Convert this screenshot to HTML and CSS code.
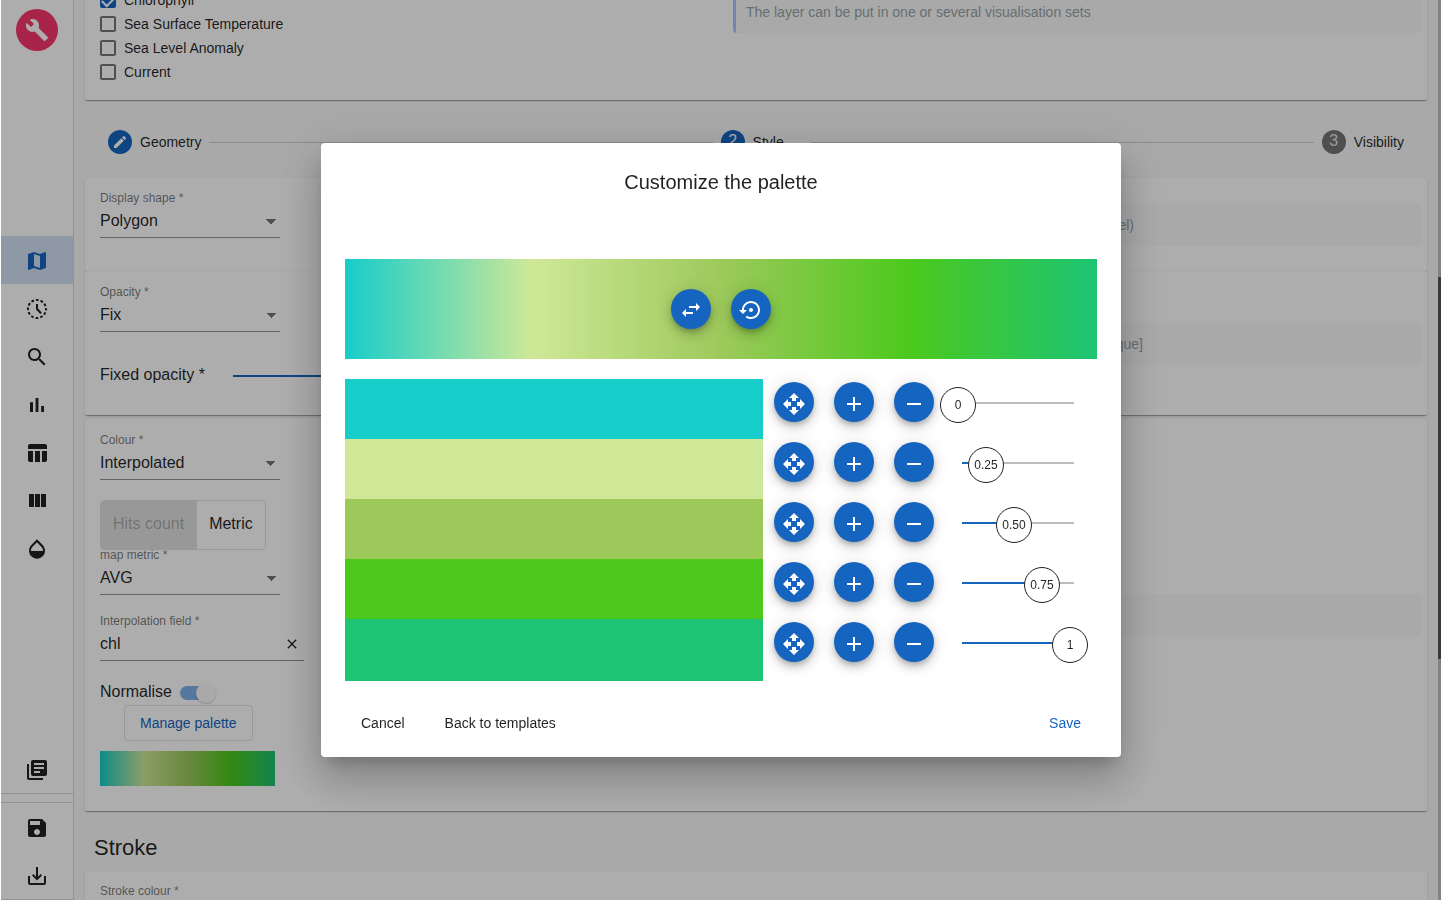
FILE: index.html
```html
<!DOCTYPE html>
<html lang="en">
<head>
<meta charset="utf-8">
<title>Layer edition</title>
<link rel="stylesheet" href="styles.css">
</head>
<body>
<div class="app">
  <nav class="sidebar">
    <a class="logo" href="#" aria-label="Home"><svg class="icon" viewBox="0 0 24 24"><path d="M22.7 19l-9.1-9.1c.9-2.3.4-5-1.5-6.9-2-2-5-2.4-7.4-1.3L9 6 6 9 1.6 4.7C.4 7.1.9 10.1 2.9 12.1c1.9 1.9 4.6 2.4 6.9 1.5l9.1 9.1c.4.4 1 .4 1.4 0l2.3-2.3c.5-.4.5-1.1.1-1.4z"/></svg></a>
    <div class="nav-main">
      <a class="nav-item active" href="#" aria-label="Map"><svg class="icon" viewBox="0 0 24 24"><path d="M20.5 3l-.16.03L15 5.1 9 3 3.36 4.9c-.21.07-.36.25-.36.48V20.5c0 .28.22.5.5.5l.16-.03L9 18.9l6 2.1 5.64-1.9c.21-.07.36-.25.36-.48V3.5c0-.28-.22-.5-.5-.5zM15 19l-6-2.11V5l6 2.11V19z"/></svg></a>
      <a class="nav-item" href="#" aria-label="Timeline"><svg class="icon" viewBox="0 0 24 24"><circle cx="12" cy="12" r="9" fill="none" stroke="currentColor" stroke-width="2" stroke-dasharray="2.7 2.012" stroke-dashoffset="1.35"/><path d="M11 7h2v4.6l3.8 4-1.5 1.3L11 12.4z"/></svg></a>
      <a class="nav-item" href="#" aria-label="Search"><svg class="icon" viewBox="0 0 24 24"><path d="M15.5 14h-.79l-.28-.27C15.41 12.59 16 11.11 16 9.5 16 5.91 13.09 3 9.5 3S3 5.91 3 9.5 5.91 16 9.5 16c1.61 0 3.09-.59 4.23-1.57l.27.28v.79l5 4.99L20.49 19l-4.99-5zm-6 0C7.01 14 5 11.99 5 9.5S7.01 5 9.5 5 14 7.01 14 9.5 11.99 14 9.5 14z"/></svg></a>
      <a class="nav-item" href="#" aria-label="Analytics"><svg class="icon" viewBox="0 0 24 24"><path d="M5 9.2h3V19H5zM10.6 5h2.8v14h-2.8zm5.6 8H19v6h-2.8z"/></svg></a>
      <a class="nav-item" href="#" aria-label="Table"><svg class="icon" viewBox="0 0 24 24"><path d="M10 10.02h5V21h-5zM17 21h3c1.1 0 2-.9 2-2v-9h-5v11zm3-18H5c-1.1 0-2 .9-2 2v3h19V5c0-1.1-.9-2-2-2zM3 19c0 1.1.9 2 2 2h3V10H3v9z"/></svg></a>
      <a class="nav-item" href="#" aria-label="Columns"><svg class="icon" viewBox="0 0 24 24"><path d="M10 18h5V5h-5v13zm-6 0h5V5H4v13zM16 5v13h5V5h-5z"/></svg></a>
      <a class="nav-item" href="#" aria-label="Look and feel"><svg class="icon" viewBox="0 0 24 24"><path d="M17.66 8L12 2.35 6.34 8C4.78 9.56 4 11.64 4 13.64s.78 4.11 2.34 5.67 3.61 2.35 5.66 2.35 4.1-.79 5.66-2.35S20 15.64 20 13.64 19.22 9.56 17.66 8zM6 14c.01-2 .62-3.27 1.76-4.4L12 5.27l4.24 4.38C17.38 10.77 17.99 12 18 14H6z"/></svg></a>
    </div>
    <div class="nav-library">
      <a class="nav-item" href="#" aria-label="Library"><svg class="icon" viewBox="0 0 24 24"><path d="M4 6H2v14c0 1.1.9 2 2 2h14v-2H4V6zm16-4H8c-1.1 0-2 .9-2 2v12c0 1.1.9 2 2 2h12c1.1 0 2-.9 2-2V4c0-1.1-.9-2-2-2zm-1 9H9V9h10v2zm-4 4H9v-2h6v2zm4-8H9V5h10v2z"/></svg></a>
    </div>
    <div class="nav-actions">
      <a class="nav-item" href="#" aria-label="Save"><svg class="icon" viewBox="0 0 24 24"><path d="M17 3H5c-1.11 0-2 .9-2 2v14c0 1.1.89 2 2 2h14c1.1 0 2-.9 2-2V7l-4-4zm-5 16c-1.66 0-3-1.34-3-3s1.34-3 3-3 3 1.34 3 3-1.34 3-3 3zm3-10H5V5h10v4z"/></svg></a>
      <a class="nav-item" href="#" aria-label="Download"><svg class="icon" viewBox="0 0 24 24"><path d="M19 12v7H5v-7H3v7c0 1.1.9 2 2 2h14c1.1 0 2-.9 2-2v-7h-2zm-6 .67l2.59-2.58L17 11.5l-5 5-5-5 1.41-1.41L11 12.67V3h2z"/></svg></a>
    </div>
  </nav>

  <main class="content">
    <div class="scrolled">
      <section class="card">
        <div class="checks">
          <label class="check"><input type="checkbox" checked>Chlorophyll</label>
          <label class="check"><input type="checkbox">Sea Surface Temperature</label>
          <label class="check"><input type="checkbox">Sea Level Anomaly</label>
          <label class="check"><input type="checkbox">Current</label>
        </div>
        <p class="hint active">The layer can be put in one or several visualisation sets</p>
      </section>

      <ol class="stepper">
        <li class="step"><span class="step-dot"><svg class="icon small" viewBox="0 0 24 24"><path d="M3 17.25V21h3.75L17.81 9.94l-3.75-3.75L3 17.25zM20.71 7.04c.39-.39.39-1.02 0-1.41l-2.34-2.34c-.39-.39-1.02-.39-1.41 0l-1.83 1.83 3.75 3.75 1.83-1.83z"/></svg></span><span class="step-label">Geometry</span></li>
        <li class="step-line" aria-hidden="true"></li>
        <li class="step"><span class="step-dot number">2</span><span class="step-label">Style</span></li>
        <li class="step-line" aria-hidden="true"></li>
        <li class="step"><span class="step-dot number pending">3</span><span class="step-label">Visibility</span></li>
      </ol>

      <section class="card">
        <div class="fields">
          <label class="field"><span class="field-label">Display shape *</span><select class="field-input"><option>Polygon</option></select></label>
        </div>
        <p class="hint"><span class="hint-text">Shape that displays the data (one per cell of the model)</span></p>
      </section>
      <section class="card">
        <div class="fields opacity">
          <label class="field"><span class="field-label">Opacity *</span><select class="field-input"><option>Fix</option></select></label>
          <label class="opacity-row">Fixed opacity *<input class="line-range" type="range" min="0" max="1" step="0.1" value="1"></label>
        </div>
        <p class="hint"><span class="hint-text wide">Opacity of the layer [transparent to opaque]</span></p>
      </section>

      <section class="card colour-card">
        <div class="fields colour">
          <label class="field"><span class="field-label">Colour *</span><select class="field-input"><option>Interpolated</option></select></label>
          <div class="toggle-group"><button class="toggle selected" type="button" disabled>Hits count</button><button class="toggle" type="button">Metric</button></div>
          <label class="field"><span class="field-label">map metric *</span><select class="field-input"><option>AVG</option></select></label>
          <div class="field long">
            <label class="field-label" for="interp">Interpolation field *</label>
            <div class="clearable"><input class="field-input plain" id="interp" type="text" value="chl"><button class="clear" type="button" aria-label="Clear"><svg class="icon small" viewBox="0 0 24 24"><path d="M19 6.41L17.59 5 12 10.59 6.41 5 5 6.41 10.59 12 5 17.59 6.41 19 12 13.41 17.59 19 19 17.59 13.41 12z"/></svg></button></div>
          </div>
          <label class="switch-row">Normalise<input class="switch" type="checkbox" checked></label>
          <button class="outline-button" type="button">Manage palette</button>
          <div class="palette palette-small"></div>
        </div>
        <p class="hint"></p>
      </section>

      <h2 class="section-title">Stroke</h2>
      <section class="card">
        <div class="fields">
          <label class="field"><span class="field-label">Stroke colour *</span><select class="field-input"><option>Fix</option></select></label>
        </div>
      </section>
    </div>
    <div class="scrollbar"><div class="scrollbar-thumb"></div></div>
  </main>
</div>

<div class="backdrop">
  <section class="dialog" role="dialog" aria-labelledby="dialog-title">
    <h1 class="dialog-title" id="dialog-title">Customize the palette</h1>
    <div class="palette palette-large">
      <button class="fab" type="button" aria-label="Reverse"><svg class="icon" viewBox="0 0 24 24"><path d="M6.99 11L3 15l3.99 4v-3H14v-2H6.99v-3zM21 9l-3.99-4v3H10v2h7.01v3L21 9z"/></svg></button>
      <button class="fab" type="button" aria-label="Reset"><svg class="icon" viewBox="0 0 24 24"><path d="M14 12c0-1.1-.9-2-2-2s-2 .9-2 2 .9 2 2 2 2-.9 2-2zm-2-9c-4.97 0-9 4.03-9 9H0l4 4 4-4H5c0-3.87 3.13-7 7-7s7 3.13 7 7-3.13 7-7 7c-1.51 0-2.91-.49-4.06-1.3l-1.42 1.44C8.04 20.3 9.94 21 12 21c4.97 0 9-4.03 9-9s-4.03-9-9-9z"/></svg></button>
    </div>
    <div class="stops" id="stops"></div>
    <div class="dialog-actions">
      <button class="text-button" type="button">Cancel</button>
      <button class="text-button" type="button">Back to templates</button>
      <button class="text-button primary" type="button">Save</button>
    </div>
  </section>
</div>
<script src="script.js"></script>
</body>
</html>
```

FILE: script.js
```js
const stops = [
  { color: "#16cdca", value: 0, label: "0" },
  { color: "#cfe897", value: 0.25, label: "0.25" },
  { color: "#9dc95b", value: 0.5, label: "0.50" },
  { color: "#4cc91c", value: 0.75, label: "0.75" },
  { color: "#1cc474", value: 1, label: "1" }
];

const icons = {
  Move: "M10 9h4V6h3l-5-5-5 5h3v3zm-1 1H6V7l-5 5 5 5v-3h3v-4zm14 2l-5-5v3h-3v4h3v3l5-5zm-9 3h-4v3H7l5 5 5-5h-3v-3z",
  Add: "M19 13h-6v6h-2v-6H5v-2h6V5h2v6h6v2z",
  Remove: "M19 13H5v-2h14v2z"
};

const buttons = Object.entries(icons).map(([name, d]) =>
  `<button class="fab" type="button" aria-label="${name}"><svg class="icon" viewBox="0 0 24 24"><path d="${d}"/></svg></button>`
).join("");

document.getElementById("stops").innerHTML = stops.map((s, i) =>
  `<div class="stop">
    <input class="swatch" type="color" value="${s.color}" aria-label="Colour ${i + 1}">
    <div class="stop-buttons">${buttons}</div>
    <div class="slider" style="--value:${s.value}">
      <input class="slider-input" type="range" min="0" max="1" step="0.01" value="${s.value}" aria-label="Position ${i + 1}">
      <output class="slider-value">${s.label}</output>
    </div>
  </div>`
).join("");
```

FILE: styles.css
```css
:root {
  --primary: #1565c0;
  --ink: rgba(0, 0, 0, .87);
  --line: #e0e0e0;
}

* { box-sizing: border-box; }

body {
  margin: 0;
  padding-left: 1px;
  height: 100vh;
  overflow: hidden;
  background: #fff;
  color: var(--ink);
  font: 14px "Liberation Sans", Arial, sans-serif;
}

button, input, select { font: inherit; color: inherit; margin: 0; }
button { border: 0; background: none; padding: 0; cursor: pointer; }

.icon { width: 24px; height: 24px; fill: currentColor; flex: none; display: block; }
.icon.small { width: 16px; height: 16px; }

.app { display: flex; height: 100%; background: #fafafa; }

/* Sidebar */
.sidebar {
  width: 73px;
  flex: none;
  display: flex;
  flex-direction: column;
  background: #fff;
  border-right: 1px solid #d8d8d8;
  border-bottom: 1px solid #d8d8d8;
}
.logo {
  width: 42px;
  height: 42px;
  margin: 9px auto 0;
  border-radius: 50%;
  display: grid;
  place-items: center;
  background: #f8366a;
  color: #fff;
}
.nav-main { margin-top: 185px; }
.nav-item { height: 48px; display: grid; place-items: center; padding-top: 1px; color: #212121; }
.nav-item.active { background: #d0e0f2; color: var(--primary); }
.nav-library { margin-top: auto; border-bottom: 1px solid #d8d8d8; }
.nav-actions { margin-top: 8px; border-top: 1px solid #d8d8d8; }

/* Form page */
.content { flex: 1; min-width: 0; overflow: hidden; position: relative; padding: 0 13px 0 10px; }
.scrolled { margin-top: -76px; }
.scrollbar { position: absolute; top: 0; right: 0; bottom: 0; width: 3px; background: #c1c1c1; display: flex; flex-direction: column; }
.scrollbar-thumb { margin-top: 277px; height: 382px; background: #555; }

.card {
  display: grid;
  grid-template-columns: 633fr 689fr;
  align-items: center;
  margin: 0 1px;
  padding: 12px 5px 12px 15px;
  min-height: 94px;
  background: #fff;
  border-radius: 2px;
  box-shadow: 0 2px 1px -1px rgba(0, 0, 0, .2), 0 1px 1px rgba(0, 0, 0, .14), 0 1px 3px rgba(0, 0, 0, .12);
}
.colour-card { margin-top: 4px; }
.fields { align-self: start; }

.checks { padding: 52px 0 4px; }
.check { display: flex; align-items: center; gap: 8px; height: 24px; }
.check input {
  appearance: none;
  width: 16px;
  height: 16px;
  border: 2px solid #757575;
  border-radius: 2px;
}
.check input:checked {
  border-color: var(--primary);
  background: var(--primary);
  display: grid;
  place-items: center;
}
.check input:checked::before {
  content: "";
  width: 11px;
  height: 6px;
  border: solid #fff;
  border-width: 0 0 2px 2px;
  rotate: -45deg;
}

.hint {
  margin: 0;
  height: 42px;
  padding: 0 10px;
  border-left: 3px solid transparent;
  border-radius: 4px;
  background: #fafafa;
  background-clip: padding-box;
  color: #95a5a6;
  line-height: 42px;
}
.hint.active { border-left-color: #acc5ff; }
.hint-text { display: block; width: 388px; text-align: right; }
.hint-text.wide { width: 397px; }

.stepper { display: flex; align-items: center; gap: 8px; height: 78px; margin: 0; padding: 6px 24px 0; list-style: none; }
.step { display: flex; align-items: center; gap: 8px; }
.step-dot {
  width: 24px;
  height: 24px;
  border-radius: 50%;
  display: grid;
  place-items: center;
  background: var(--primary);
  color: #fff;
}
.step-dot.number { padding-bottom: 2px; font-size: 16px; line-height: 20px; }
.step-dot.pending { background: #757575; color: #e0e0e0; }
.step-label { min-width: 50px; }
.step-line { flex: 1; height: 1px; background: #cfcfcf; }

.field { display: block; width: 180px; }
.field.long { width: 204px; }
.field-label { display: block; height: 16px; line-height: 16px; font-size: 12px; color: rgba(0, 0, 0, .54); }
.field-input {
  appearance: none;
  display: block;
  width: 100%;
  height: 32px;
  padding: 0 0 3px;
  border: 0;
  border-bottom: 1px solid #949494;
  border-radius: 0;
  outline: 0;
  font-size: 16px;
  background: linear-gradient(to bottom right, #757575 50%, transparent 50%) no-repeat right 4px top 13px / 5px 5px,
    linear-gradient(to bottom left, #757575 50%, transparent 50%) no-repeat right 9px top 13px / 5px 5px;
}
.field-input.plain { background: none; padding-bottom: 1px; }
.clearable { position: relative; }
.clear { position: absolute; right: 4px; top: 7px; }

.opacity { display: grid; gap: 31px; padding-bottom: 16px; }
.opacity-row { display: flex; align-items: center; gap: 28px; height: 24px; font-size: 16px; }
.line-range {
  appearance: none;
  width: 200px;
  height: 2px;
  margin-top: 2px;
  background: var(--primary);
}
.line-range::-webkit-slider-thumb { appearance: none; width: 20px; height: 20px; border-radius: 50%; background: var(--primary); }

.colour { padding: 1px 0 13px; }
.toggle-group {
  display: flex;
  width: fit-content;
  height: 50px;
  margin: 20px 0 -3px;
  border: 1px solid var(--line);
  border-radius: 4px;
  overflow: hidden;
}
.toggle { padding: 0 12px 2px; font-size: 16px; }
.toggle + .toggle { border-left: 1px solid var(--line); }
.toggle.selected { background: var(--line); color: rgba(0, 0, 0, .26); }
.colour .long { margin-top: 18px; }
.switch-row { display: flex; align-items: center; gap: 8px; width: fit-content; height: 24px; margin-top: 19px; font-size: 16px; }
.switch {
  appearance: none;
  width: 36px;
  height: 14px;
  margin-top: 2px;
  border-radius: 7px;
  background: linear-gradient(to right, #81b0e8 28px, transparent 28px);
  display: flex;
  align-items: center;
  justify-content: flex-end;
}
.switch::before {
  content: "";
  width: 20px;
  height: 20px;
  border-radius: 50%;
  background: #fafafa;
  box-shadow: 0 1px 2px rgba(0, 0, 0, .2);
}
.outline-button {
  display: block;
  height: 36px;
  margin: 1px 0 10px 24px;
  padding: 0 15px;
  border: 1px solid var(--line);
  border-radius: 4px;
  color: var(--primary);
}
.palette { background: linear-gradient(to right, #16cdca, #cfe897, #9dc95b, #4cc91c, #1cc474); }
.palette-small { width: 175px; height: 35px; }
.section-title { margin: 24px 10px 10px; font-size: 22px; line-height: 26px; font-weight: 400; }

/* Dialog */
.backdrop {
  position: fixed;
  inset: 0 0 0 1px;
  display: flex;
  align-items: center;
  justify-content: center;
  background: rgba(0, 0, 0, .32);
}
.dialog {
  width: 800px;
  max-width: 90vw;
  padding: 24px 24px 16px;
  border-radius: 4px;
  background: #fff;
  box-shadow: 0 11px 15px -7px rgba(0, 0, 0, .2), 0 24px 38px 3px rgba(0, 0, 0, .14), 0 9px 46px 8px rgba(0, 0, 0, .12);
}
.dialog-title { margin: 0 0 62px; font-size: 20px; line-height: 30px; font-weight: 400; text-align: center; }
.palette-large { display: flex; align-items: center; justify-content: center; gap: 20px; height: 100px; margin-bottom: 20px; }
.fab {
  width: 40px;
  height: 40px;
  padding-top: 2px;
  border-radius: 50%;
  display: grid;
  place-items: center;
  background: var(--primary);
  color: #fff;
  box-shadow: 0 3px 5px -1px rgba(0, 0, 0, .2), 0 6px 10px rgba(0, 0, 0, .14), 0 1px 18px rgba(0, 0, 0, .12);
}
.stop { display: flex; height: 60px; padding-right: 9px; }
.stop:last-child { height: 62px; }
.swatch { appearance: none; flex: 1; min-width: 0; height: 100%; padding: 0; border: 0; background: none; }
.swatch::-webkit-color-swatch-wrapper { padding: 0; }
.swatch::-webkit-color-swatch { border: 0; border-radius: 0; }
.stop-buttons { display: flex; gap: 20px; padding: 3px 6px 0 11px; }
.stop-buttons .fab { padding-top: 4px; }

.slider { position: relative; width: 148px; height: 36px; margin-top: 8px; }
.slider-input {
  appearance: none;
  display: block;
  width: 100%;
  height: 36px;
  --fill: calc(var(--value) * 112px);
  background: linear-gradient(var(--primary), var(--primary)) no-repeat 22px 15px / var(--fill) 2px,
    linear-gradient(#bdbdbd, #bdbdbd) no-repeat 22px 15px / 112px 2px;
}
.slider-input::-webkit-slider-thumb {
  appearance: none;
  width: 36px;
  height: 36px;
  border: 1px solid #212121;
  border-radius: 50%;
  background: #fff;
}
.slider-value {
  position: absolute;
  top: 0;
  left: calc(var(--value) * 112px);
  width: 36px;
  text-align: center;
  font-size: 12px;
  line-height: 36px;
  pointer-events: none;
}

.dialog-actions { display: flex; gap: 8px; margin-top: 24px; }
.text-button { height: 36px; padding: 0 16px; border-radius: 4px; }
.text-button.primary { margin-left: auto; color: var(--primary); }
```
